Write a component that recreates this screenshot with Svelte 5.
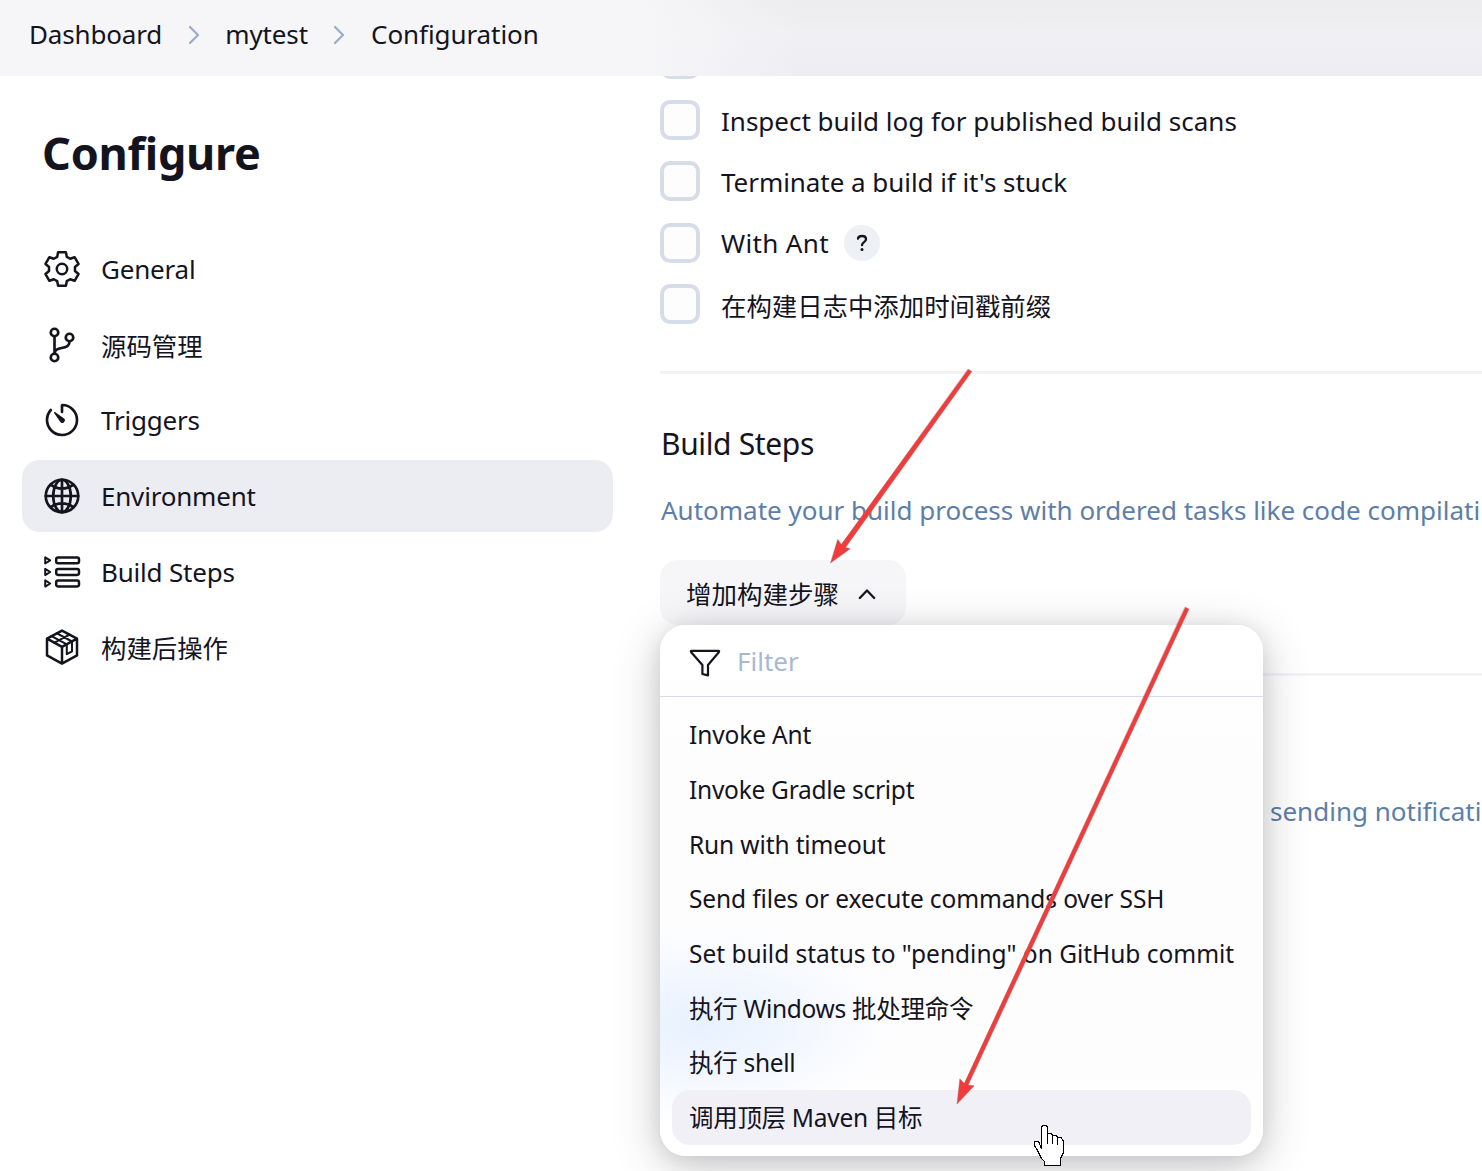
<script>
  const crumbs = ['Dashboard', 'mytest', 'Configuration'];

  const nav = [
    { label: 'General', icon: 'gear' },
    { label: '源码管理', icon: 'branch', cjk: true },
    { label: 'Triggers', icon: 'timer' },
    { label: 'Environment', icon: 'globe', active: true },
    { label: 'Build Steps', icon: 'steps' },
    { label: '构建后操作', icon: 'package', cjk: true }
  ];

  const options = [
    { label: 'Inspect build log for published build scans', cls: 'inspect' },
    { label: "Terminate a build if it's stuck", cls: 'terminate' },
    { label: 'With Ant', help: true, cls: 'ant' },
    { label: '在构建日志中添加时间戳前缀', cls: 'cjk' }
  ];

  const steps = [
    { label: 'Invoke Ant' },
    { label: 'Invoke Gradle script' },
    { label: 'Run with timeout' },
    { label: 'Send files or execute commands over SSH' },
    { label: 'Set build status to "pending" on GitHub commit' },
    { label: '执行 Windows 批处理命令' },
    { label: '执行 shell' },
    { label: '调用顶层 Maven 目标', active: true }
  ];

  // Six-toothed gear outline centred in a 40 unit box
  const gearPath = (() => {
    const tooth = [[-4.8, -12.2], [-3.9, -16.8], [3.9, -16.8], [4.8, -12.2]];
    const pts = [];
    for (let k = 0; k < 6; k++) {
      const a = (k * Math.PI) / 3;
      for (const [x, y] of tooth) {
        pts.push(
          `${(20 + x * Math.cos(a) - y * Math.sin(a)).toFixed(2)} ${(20 + x * Math.sin(a) + y * Math.cos(a)).toFixed(2)}`
        );
      }
    }
    return `M${pts.join('L')}Z`;
  })();
</script>

<div class="page">
  <header>
    {#each crumbs as crumb, i}
      {#if i > 0}
        <svg class="sep" viewBox="0 0 12 20"><path d="M2 2l8 8-8 8" /></svg>
      {/if}
      <span class="crumb">{crumb}</span>
    {/each}
  </header>

  <div class="body">
    <aside>
      <h1>Configure</h1>
      <nav>
        {#each nav as item}
          <div class="item" class:active={item.active}>
            {#if item.icon === 'gear'}
              <svg class="icon" viewBox="0 0 40 40"><path d={gearPath} /><circle cx="20" cy="20" r="5.2" /></svg>
            {:else if item.icon === 'branch'}
              <svg class="icon big" viewBox="0 0 512 512">
                <circle cx="160" cy="96" r="48" /><circle cx="160" cy="416" r="48" /><circle cx="352" cy="160" r="48" />
                <path d="M160 368V144M352 208c0 128-192 48-192 160" />
              </svg>
            {:else if item.icon === 'timer'}
              <svg class="icon big" viewBox="0 0 512 512">
                <path d="M112.91 128A191.85 191.85 0 0064 254c-1.18 106.35 85.65 193.8 192 194 106.2.2 192-85.83 192-192 0-104.54-83.55-189.61-187.5-192a4.36 4.36 0 00-4.5 4.37V152" />
                <path class="solid" d="M233.38 278.63l-79-113a8.13 8.13 0 0111.32-11.32l113 79a32.5 32.5 0 01-37.25 53.26 33.21 33.21 0 01-8.07-7.94z" />
              </svg>
            {:else if item.icon === 'globe'}
              <svg class="icon big" viewBox="0 0 512 512">
                <circle cx="256" cy="256" r="208" />
                <path d="M256 48c-58.07 0-112.67 93.13-112.67 208S197.93 464 256 464s112.67-93.13 112.67-208S314.07 48 256 48z" />
                <path d="M117.33 117.33c38.24 27.15 86.38 43.34 138.67 43.34s100.43-16.19 138.67-43.34M394.67 394.67c-38.24-27.15-86.38-43.34-138.67-43.34s-100.43 16.19-138.67 43.34M256 48v416M464 256H48" />
              </svg>
            {:else if item.icon === 'steps'}
              <svg class="icon" viewBox="0 0 40 40">
                {#each [8.4, 20, 31.5] as y}
                  <rect x="14.2" y={y - 2.9} width="22.8" height="5.8" rx="1.8" />
                  <path class="thin" d="M3.2 {y - 3.1}v6.200l5-3.100z" />
                {/each}
              </svg>
            {:else}
              <svg class="icon" viewBox="0 0 40 40">
                <path d="M20 3.6L35 11.6V28.4L20 36.6L5 28.4V11.6ZM5 11.6L20 19.8L35 11.6M20 19.8V36.6" />
                <path class="thin" d="M15 6.400L30 14.500M9.600 9.100L24.800 17.400V27.200L30 24.400V14.500M12.500 15.700L27.500 7.600" />
              </svg>
            {/if}
            <span class:cjk={item.cjk}>{item.label}</span>
          </div>
        {/each}
      </nav>
    </aside>

    <main>
      <div class="options">
        <div class="option"><i class="box"></i></div>
        {#each options as option}
          <div class="option">
            <i class="box"></i>
            <span class={option.cls}>{option.label}</span>
            {#if option.help}
              <button class="help" aria-label="Help">
                <svg viewBox="0 0 12 18"><path d="M2 4.600C2.200 2.800 3.800 2 6 2s4 1.200 4 3.200c0 3-4 2.900-4 6" /><circle cx="6" cy="15.600" r="1.500" /></svg>
              </button>
            {/if}
          </div>
        {/each}
      </div>

      <section>
        <h2>Build Steps</h2>
        <p>Automate your build process with ordered tasks like code compilati</p>
        <div class="adder">
          <button class="add">
            <span class="cjk">增加构建步骤</span>
            <svg viewBox="0 0 18 12"><path d="M1.800 10l7.200-7.500 7.200 7.500" /></svg>
          </button>
          <div class="menu">
            <div class="filter">
              <svg viewBox="0 0 32 28"><path d="M2.600 1.800H29.400Q30.600 1.800 29.800 3.200L19 16V26.400L13.400 25V16L2.200 3.200Q1.400 1.800 2.600 1.800Z" /></svg>
              <span>Filter</span>
            </div>
            <div class="list">
              {#each steps as step, i}
                <div class="step s{i}" class:active={step.active}>{step.label}</div>
              {/each}
            </div>
          </div>
        </div>
      </section>

      <section class="post">
        <p>sending notificati</p>
      </section>
    </main>
  </div>

  <svg class="overlay" viewBox="0 0 1482 1171">
    <path class="arrow" d="M968.200 369.200L971.800 371.500L845.600 547.400L850.300 548.700L830.500 563L837.700 539.200L841.300 544.300Z" />
    <path class="arrow" d="M1185.200 607.200L1189 608.900L968.200 1085L974.200 1085.700L957 1104L959.800 1078.800L964.200 1083.300Z" />
    <path class="hand" d="M1041.500 1148.500V1127.500L1043 1125.500H1046L1047.500 1127.500V1133.500H1051L1053 1135.500L1056 1135.500L1058 1137.500H1061L1063.500 1141.500V1152.500L1060.500 1158.500V1165.500H1044.500V1161.500L1041.500 1158.500L1038 1151.500L1034.500 1145.500V1141.500H1038.500ZM1047.500 1133.500V1143.500M1052.500 1135.500V1143.500M1057.500 1137.500V1144.500" />
  </svg>
</div>

<style>
  :global(body) { background: #fff; overflow: hidden; }
  .page {
    position: relative; width: 1482px; height: 1171px; overflow: hidden;
    display: flex; flex-direction: column;
    font: 26px/36px 'Noto Sans', 'Noto Sans CJK SC', sans-serif; color: #14141f; white-space: nowrap;
  }
  svg { fill: none; stroke: currentColor; stroke-linecap: round; stroke-linejoin: round; flex: none; }
  header {
    flex: none; height: 76px; box-sizing: border-box; padding: 0 0 6px 29px;
    display: flex; align-items: center; gap: 25.600px;
    background:
      linear-gradient(90deg, #f6f6f9 640px, rgba(246, 246, 249, 0) 800px),
      linear-gradient(#ececef, #f0f0f3 45%, #eeeef2);
  }
  .crumb { margin-bottom: 2px; letter-spacing: -0.16px; }
  .crumb:last-child { letter-spacing: -0.08px; }
  .sep { width: 12px; height: 20px; stroke: #9badc8; stroke-width: 2.300; }
  .body { flex: 1; min-height: 0; display: flex; }
  aside { width: 591px; padding: 46px 0 0 22px; flex: none; }
  h1 { margin: 0 0 50px 20px; font-size: 45px; line-height: 61px; font-weight: 700; letter-spacing: -0.25px; }
  nav { display: flex; flex-direction: column; gap: 3.700px; }
  .item { height: 72px; display: flex; align-items: center; gap: 19px; padding-left: 20px; border-radius: 18px; }
  .item.active { background: #ecedf3; }
  .item span { letter-spacing: -0.2px; }
  .item .cjk { letter-spacing: 0; padding-top: 2px; }
  .icon { width: 40px; height: 40px; stroke-width: 2.500; }
  .icon.big { stroke-width: 34; }
  .icon .solid { fill: currentColor; stroke: none; }
  .icon .thin { stroke-width: 2; }
  .cjk { font-size: 25.400px; }
  main { flex: 1; min-width: 0; padding-left: 47px; overflow: hidden; display: flex; flex-direction: column; }
  .options { margin-top: -37.200px; display: flex; flex-direction: column; gap: 21.300px; padding-bottom: 47px; }
  .option { height: 40px; display: flex; align-items: center; }
  .option span { margin-left: 21px; padding-top: 1px; }
  .option .terminate { letter-spacing: -0.05px; }
  .option .ant { letter-spacing: .35px; }
  .option .cjk { padding-top: 3px; }
  .box { width: 40px; height: 40px; box-sizing: border-box; border: 4px solid #d7dde8; border-radius: 10px; background: #fdfdfd; }
  .help {
    width: 36px; height: 36px; margin-left: 15px; padding: 0; border: 0; border-radius: 50%;
    background: #edf0f4; color: inherit; display: grid; place-items: center;
  }
  .help svg { width: 12px; height: 18px; stroke-width: 2.300; }
  .help circle { fill: currentColor; stroke: none; }
  section { border-top: 3px solid #f3f3f7; flex: none; }
  h2 { margin: 50px 0 0 1px; font-size: 30px; line-height: 40px; font-weight: 400; letter-spacing: -0.35px; }
  p { margin: 28px 0 0 1px; color: #5d7ea8; letter-spacing: 0; }
  .adder { position: relative; margin-top: 32px; width: 246px; height: 65px; }
  .add {
    width: 246px; height: 65px; padding: 2px 30px 0 26px; border: 0; border-radius: 18px; background: #f6f6f9;
    font: inherit; color: inherit; display: flex; align-items: center; justify-content: space-between;
  }
  .add .cjk { padding-top: 1px; font-size: 25.500px; }
  .add svg { width: 18px; height: 12px; stroke-width: 2.300; }
  .menu {
    position: absolute; z-index: 1; left: 0; top: 65px; width: 603px; height: 531px; border-radius: 26px;
    background:
      radial-gradient(ellipse 190px 95px at 40px 400px, #e7f1fe, rgba(231, 241, 254, 0)),
      linear-gradient(#fff, #fdfdfe 30%, #fdfdfe 80%, #fff);
    box-shadow: 0 10px 50px rgba(0, 0, 20, .2), 0 4px 22px rgba(0, 0, 20, .1);
  }
  .filter { height: 72px; box-sizing: border-box; border-bottom: 1px solid #d5dbe8; padding-left: 29px; display: flex; align-items: center; gap: 16px; color: #a9b9d0; }
  .filter svg { width: 32px; height: 28px; color: #14141f; stroke-width: 2.200; margin-top: 4px; }
  .list { padding: 10.300px 12px; font-size: 24.500px; }
  .step { height: 54.700px; line-height: 55.400px; padding-left: 17px; border-radius: 18px; }
  .step.active { background: #f1f0f7; }
  .s0, .s2, .s3 { letter-spacing: -0.13px; }
  .s1 { letter-spacing: -0.27px; }
  .s4 { letter-spacing: -0.02px; }
  .s5, .s6, .s7 { letter-spacing: -0.3px; }
  .post { margin-top: 48px; }
  .post p { margin: 117px 0 0 610px; }
  .overlay { position: absolute; z-index: 2; left: 0; top: 0; width: 1482px; height: 1171px; pointer-events: none; }
  .arrow { fill: #f23c3c; stroke: #a06a6a; stroke-width: .4; }
  .hand { fill: #fff; stroke: #000; stroke-width: 1.200; shape-rendering: crispEdges; }
</style>
